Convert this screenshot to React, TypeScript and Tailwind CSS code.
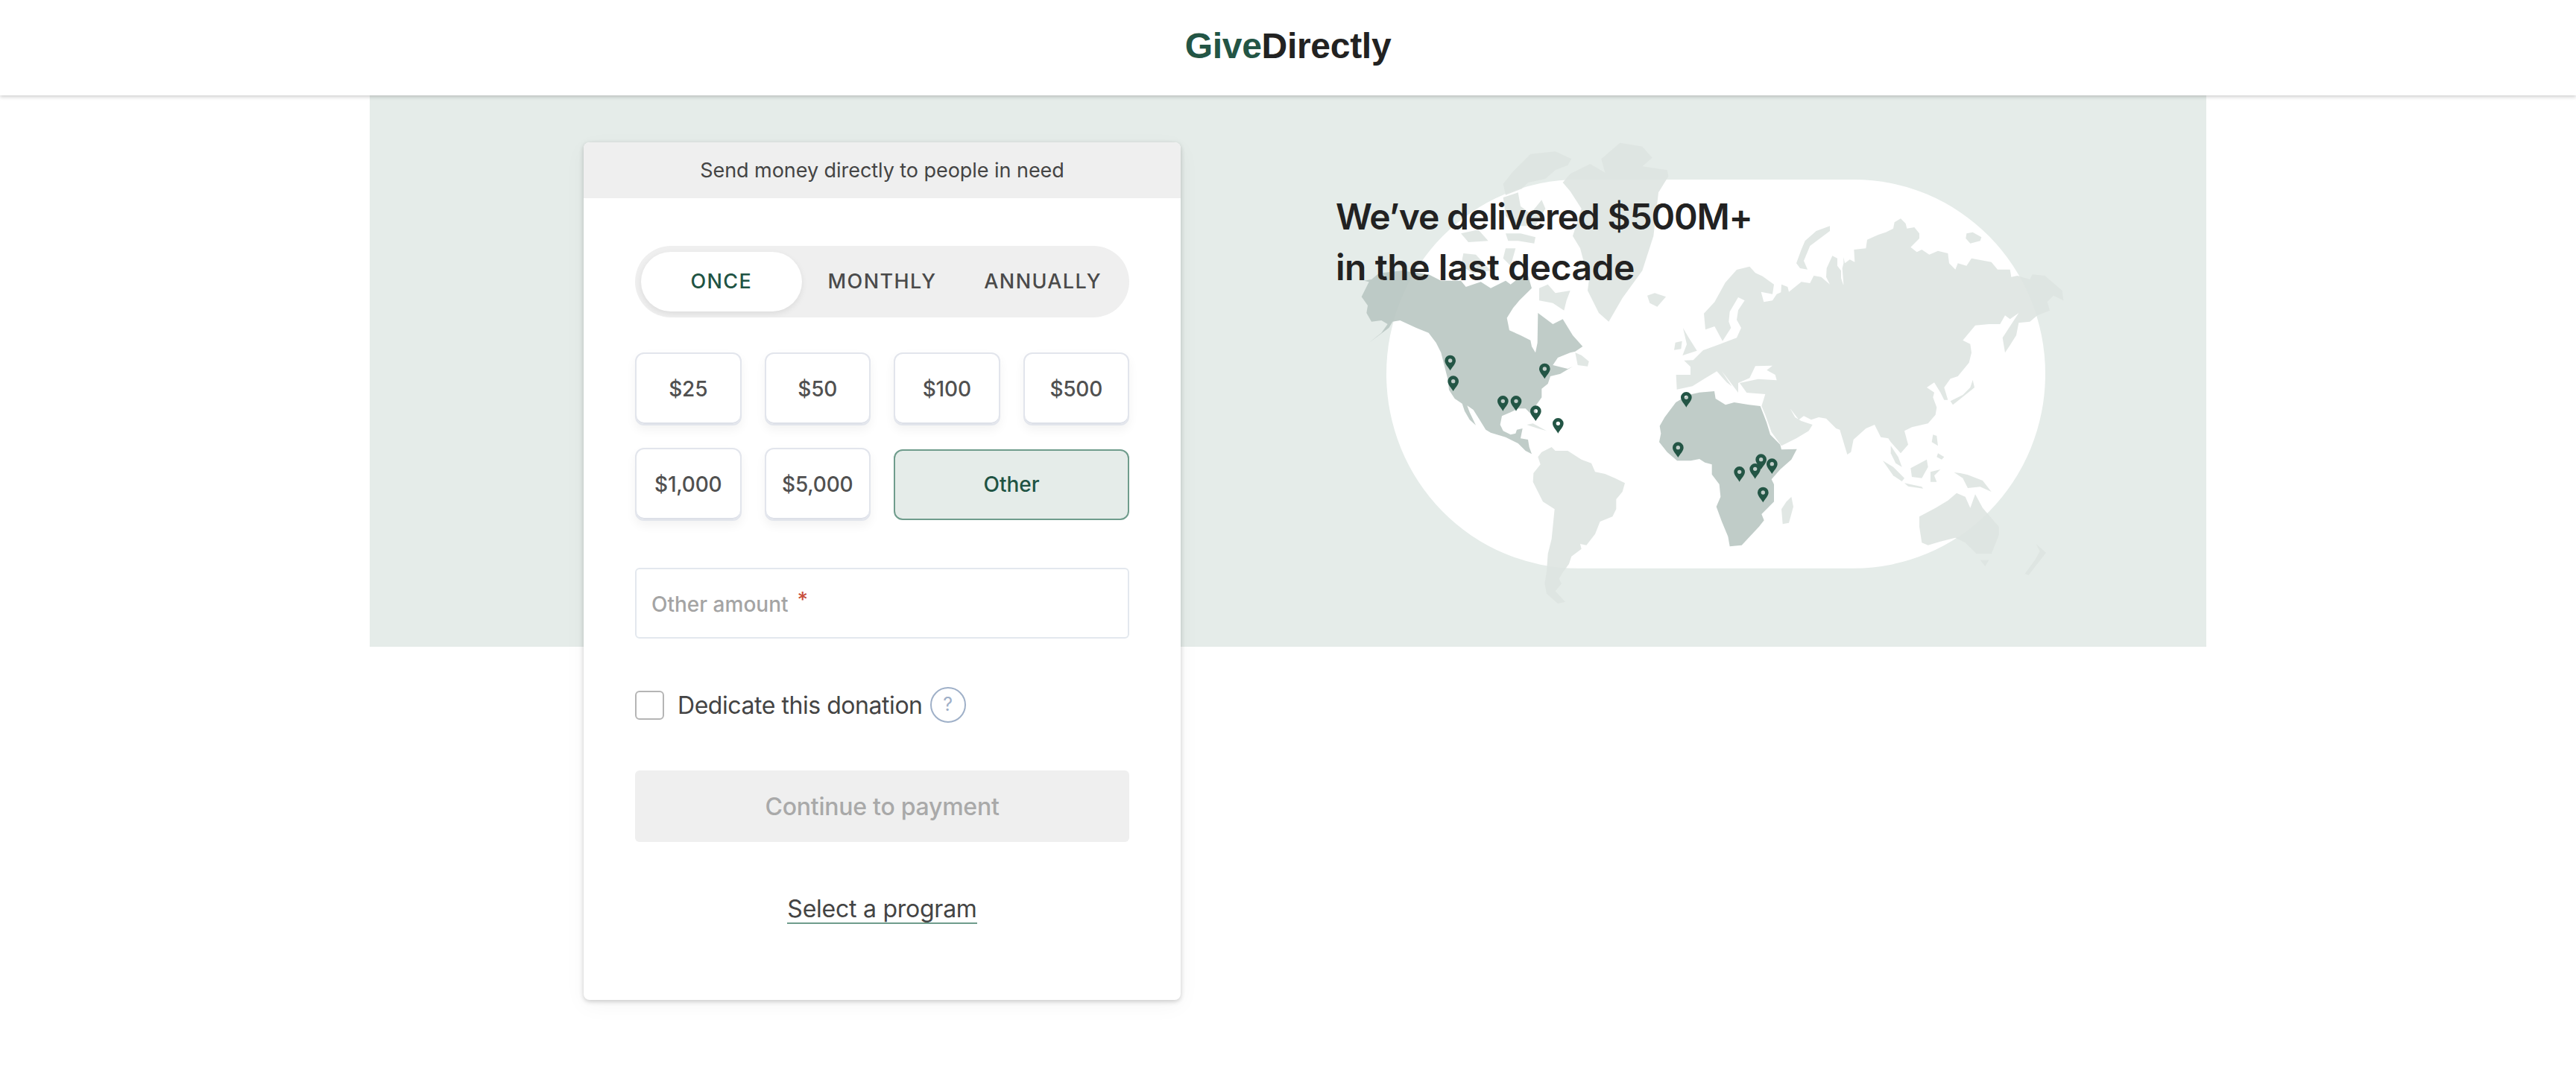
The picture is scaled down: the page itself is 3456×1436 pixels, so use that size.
const amounts = ["$25", "$50", "$100", "$500", "$1,000", "$5,000"];

// land outlines, in 3x units from the map's top left corner
const lightLand = [
  // eurasia
  "1289,998 1286,939 1344,939 1344,907 1318,881 1355,880 1395,840 1461,816 1530,790 1548,750 1530,718 1536,679 1562,640 1536,627 1502,685 1498,725 1507,750 1473,803 1441,744 1404,757 1398,692 1441,646 1484,568 1530,516 1582,503 1605,529 1634,542 1680,575 1674,614 1628,605 1639,646 1674,640 1691,614 1708,607 1710,575 1735,585 1740,605 1790,565 1825,570 1840,540 1870,545 1905,575 1890,545 1892,510 1915,460 1935,470 1935,500 1950,520 1950,550 1960,580 1935,610 1960,575 1955,510 1960,490 1960,465 1965,490 1985,475 2005,485 2002,435 2050,430 2055,395 2100,375 2130,365 2160,350 2165,325 2190,310 2210,330 2215,350 2245,345 2265,370 2265,390 2230,425 2255,445 2275,435 2305,455 2340,440 2380,450 2385,490 2410,515 2420,490 2455,500 2475,470 2555,485 2580,515 2630,515 2635,545 2660,540 2710,555 2720,535 2770,540 2840,600 2845,640 2805,620 2780,645 2790,680 2740,700 2710,725 2665,730 2655,780 2630,820 2610,850 2600,790 2665,690 2630,715 2610,700 2590,735 2545,735 2490,740 2440,800 2470,815 2475,850 2465,890 2420,945 2390,955 2365,990 2380,1040 2365,1040 2350,1010 2325,970 2295,990 2325,1010 2320,1030 2335,1070 2330,1100 2300,1135 2235,1150 2205,1165 2220,1220 2190,1255 2150,1210 2140,1195 2110,1190 2085,1140 2050,1155 2000,1200 1990,1250 1975,1260 1945,1160 1930,1155 1890,1115 1860,1110 1830,1120 1800,1105 1780,1120 1745,1075 1765,1110 1790,1125 1835,1140 1820,1165 1770,1195 1710,1225 1670,1170 1645,1100 1630,1065 1645,1017 1570,1011 1542,972 1616,956 1691,961 1685,939 1651,920 1674,902 1605,904 1582,952 1536,972 1536,1011 1490,950 1470,925 1510,985 1490,970 1450,925 1400,955 1352,985",
  "1905,340 1850,360 1805,400 1790,435 1770,490 1785,510 1815,515 1800,480 1825,420 1905,360",
  "2455,370 2480,365 2515,385 2510,400 2470,410 2452,390",
  "1314,751 1337,790 1370,842 1312,861 1329,816",
  "1278,839 1283,809 1310,803 1306,835",
  // japan and islands
  "2480,960 2487,990 2450,1020 2400,1060 2390,1045 2440,1020 2470,990",
  "2320,1180 2335,1185 2340,1225 2315,1210",
  "2340,1255 2365,1270 2355,1280 2335,1270",
  "2230,1315 2295,1280 2300,1310 2275,1355 2235,1350",
  "2118,1285 2160,1310 2205,1355 2195,1368 2160,1345",
  "2205,1375 2275,1390 2280,1397 2220,1388",
  "2310,1330 2350,1320 2325,1345 2335,1370 2310,1370",
  "2405,1332 2430,1335 2460,1342 2520,1365 2555,1410 2510,1390 2460,1395 2440,1355",
  "2150,1225 2180,1270 2195,1310 2170,1295 2150,1255",
  // australia, tasmania, new zealand
  "2265,1510 2330,1475 2380,1445 2415,1415 2450,1430 2470,1475 2490,1420 2520,1475 2585,1550 2585,1585 2555,1660 2495,1660 2450,1615 2410,1595 2350,1610 2300,1625 2275,1615 2265,1550",
  "2510,1685 2545,1685 2530,1710",
  "2735,1620 2775,1655 2740,1700 2705,1745 2690,1740 2730,1685 2750,1650",
  // madagascar
  "1750,1430 1758,1470 1740,1535 1715,1540 1710,1480 1730,1450",
  // south america
  "745,1250 785,1230 800,1245 850,1245 905,1280 945,1295 960,1330 1000,1338 1040,1355 1080,1375 1070,1410 1045,1440 1045,1480 1030,1510 980,1530 960,1580 925,1625 900,1620 905,1640 865,1670 855,1700 830,1735 815,1760 825,1780 800,1810 840,1853 810,1860 765,1820 757,1780 765,1730 770,1660 785,1600 797,1480 750,1450 710,1370 712,1335 740,1300 730,1270",
  // cuba
  "685,1140 710,1135 765,1165 730,1155 700,1145",
  // iceland
  "1170,620 1200,610 1245,625 1210,665 1180,650",
  // greenland
  "860,130 940,90 1000,125 985,70 1060,5 1150,20 1190,65 1150,100 1250,115 1255,140 1215,205 1195,380 1150,520 1070,630 1015,725 975,690 930,600 935,560 900,430 870,380 905,270 860,200 830,165",
  // arctic islands
  "630,120 700,50 800,40 865,70 850,95 800,115 760,150 690,165 665,190 600,215 590,170",
  "590,225 650,205 660,260 700,290 745,235 760,270 720,340 640,340 600,300",
  "600,370 660,370 720,385 715,410 650,400 610,400",
  "420,370 490,355 530,400 450,405",
  "600,430 640,430 620,500 590,470",
  "430,450 480,455 540,520 470,530 420,500",
  "735,590 770,575 800,610 860,600 845,640 835,680 790,650 735,640",
  "880,850 905,860 935,885 930,905 890,900",
];

const africa =
  "1285,1050 1240,1110 1220,1145 1225,1175 1218,1210 1250,1250 1290,1285 1345,1285 1380,1278 1402,1292 1430,1300 1430,1340 1460,1380 1465,1430 1448,1470 1470,1530 1495,1590 1502,1630 1550,1625 1620,1550 1640,1525 1630,1500 1680,1450 1680,1380 1670,1360 1705,1320 1750,1280 1772,1238 1710,1240 1705,1220 1665,1180 1650,1130 1625,1065 1580,1060 1520,1050 1485,1060 1445,1035 1440,1005 1380,1010 1335,1020";

const northAmerica =
  "20,625 50,565 30,560 60,555 90,530 180,520 290,535 340,560 420,560 440,585 500,565 540,590 600,560 620,575 665,540 690,540 705,590 680,615 655,640 630,670 605,710 615,760 660,780 700,800 705,825 720,850 728,810 730,690 790,735 830,715 870,780 910,825 880,845 860,850 810,870 790,900 850,915 870,905 820,935 780,945 770,975 745,995 745,1030 720,1065 722,1125 700,1095 680,1075 650,1075 620,1090 585,1105 578,1140 590,1165 620,1180 640,1175 645,1160 668,1155 660,1195 690,1200 695,1230 705,1258 680,1245 650,1215 600,1190 540,1172 520,1160 495,1120 470,1080 445,1063 455,1090 480,1142 455,1120 435,1085 425,1055 395,1035 372,1000 368,960 340,850 320,810 290,770 240,750 175,720 145,725 130,750 50,810 100,770 125,735 100,720 60,725 40,690 45,660";

const pins = [
  [377, 922],
  [757, 955],
  [389, 1005],
  [589, 1085],
  [642, 1085],
  [721, 1125],
  [811, 1175],
  [1327, 1070],
  [1294, 1272],
  [1628, 1320],
  [1604, 1358],
  [1672, 1338],
  [1541, 1370],
  [1636, 1453],
];

function WorldMap() {
  return (
    <svg
      viewBox="0 0 3000 1920"
      className="absolute left-[1324px] top-[62px] h-[640px] w-[1000px]"
    >
      <rect x="120" y="153" width="2652" height="1565" rx="770" ry="782" fill="#ffffff" />
      {lightLand.map((points, i) => (
        <polygon key={i} points={points} fill="#DDE4E1" fillOpacity="0.885" />
      ))}
      <polygon points={northAmerica} fill="#B8C6C1" fillOpacity="0.885" />
      <polygon points={africa} fill="#B8C6C1" fillOpacity="0.885" />
      {pins.map(([x, y]) => (
        <path
          key={`${x}-${y}`}
          transform={`translate(${x} ${y})`}
          fill="#235545"
          fillRule="evenodd"
          d="M0 0C-6 -12 -22 -26 -22 -40A22 22 0 0 1 22 -40C22 -26 6 -12 0 0ZM0 -48A8 8 0 1 0 0 -32A8 8 0 1 0 0 -48Z"
        />
      ))}
    </svg>
  );
}

function AmountButton({ label }: { label: string }) {
  return (
    <button className="flex h-[98px] items-center justify-center rounded-xl border-2 border-[#E2E5EC] bg-white text-[28px] font-medium tracking-[-0.2px] text-[#505050] shadow-[inset_0_-2px_0_#DDE0E8,0_6px_14px_rgba(0,0,0,0.05)]">
      {label}
    </button>
  );
}

function DonationCard() {
  return (
    <div className="relative z-10 h-[1151px] w-[801px] shrink-0 overflow-hidden rounded-lg bg-white shadow-[0_2px_6px_rgba(0,0,0,0.2),0_8px_30px_rgba(0,0,0,0.04)]">
      <div className="flex h-[75px] items-center justify-center bg-[#EFEFEF] pt-0.5 text-[27px] tracking-[-0.05px] text-[#444444]">
        Send money directly to people in need
      </div>
      <div className="flex flex-col px-[69px] pt-16">
        <div className="grid h-[96px] grid-cols-3 items-center rounded-full bg-[#EFEFEF] p-2 text-[27px] font-medium tracking-[1.4px] text-[#4A4A4A]">
          <div className="flex h-20 items-center justify-center rounded-full bg-white text-[#205343] shadow-[0_3px_8px_rgba(0,0,0,0.08)]">
            ONCE
          </div>
          <div className="text-center">MONTHLY</div>
          <div className="text-center">ANNUALLY</div>
        </div>

        <div className="mt-[47px] grid grid-cols-4 gap-x-[31px] gap-y-[30px]">
          {amounts.map((amount) => (
            <AmountButton key={amount} label={amount} />
          ))}
          <button className="col-span-2 flex h-[95px] items-center justify-center self-center rounded-xl border-2 border-[#6F9C8C] bg-[#E5ECE9] text-[28px] font-medium text-[#205343]">
            Other
          </button>
        </div>

        <div className="mt-[63px] flex h-[95px] items-center rounded-md border-2 border-[#E3E8EE] pl-5 pt-0.5 text-[28px] font-medium text-[#A4A4A4]">
          Other amount
          <span className="ml-3 -translate-y-1.5 text-[#C8503C]">*</span>
        </div>

        <div className="mt-[65px] flex h-12 items-center">
          <div className="h-[39px] w-[39px] rounded-md border-2 border-[#B5B5B5]" />
          <span className="ml-[18px] pt-0.5 text-[32px] tracking-[-0.45px] text-[#444444]">
            Dedicate this donation
          </span>
          <span className="ml-2.5 flex h-12 w-12 items-center justify-center rounded-full border-2 border-[#9FB0C8] text-[25px] text-[#9FB0C8]">
            ?
          </span>
        </div>

        <button className="mt-16 flex h-[96px] items-center justify-center rounded-md bg-[#EFEFEF] pt-0.5 text-[32px] font-medium tracking-[-0.25px] text-[#A9A9A9]">
          Continue to payment
        </button>

        <div className="mt-[71px] flex justify-center">
          <a className="border-b-2 border-[#6F9C8C] text-[32px] leading-[37px] tracking-[-0.25px] text-[#444444]">
            Select a program
          </a>
        </div>
      </div>
    </div>
  );
}

export default function App() {
  return (
    <div className="min-h-[1436px] bg-white font-['Inter',sans-serif]">
      <header className="relative z-20 flex h-[128px] items-center justify-center bg-white pb-1 font-['Liberation_Sans',sans-serif] text-[48px] font-bold tracking-[-0.3px] shadow-[0_2px_5px_rgba(0,0,0,0.2)]">
        <span className="text-[#235545]">Give</span>
        <span className="text-[#222222]">Directly</span>
      </header>
      <main className="relative mx-auto flex h-[740px] w-[2464px] items-start bg-[#E5ECE9] pl-[287px] pt-[63px]">
        <WorldMap />
        <DonationCard />
        <h1 className="relative z-10 ml-[208px] mt-[66px] text-[48px] font-semibold leading-[68px] text-[#222222]">
          <span className="tracking-[-1.2px]">We’ve delivered $500M+</span>
          <br />
          <span className="tracking-[-0.45px]">in the last decade</span>
        </h1>
      </main>
    </div>
  );
}
